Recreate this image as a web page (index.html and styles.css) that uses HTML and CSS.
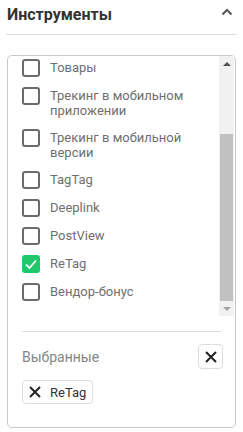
FILE: index.html
```html
<!DOCTYPE html>
<html>
<head>
    <title>Инструменты</title>
    <link rel="stylesheet" href="styles.css">
</head>
<body>
    <div class="panel-head">
        <span class="panel-title">Инструменты</span>
        <svg class="chevron" width="12" height="8" viewBox="0 0 12 8">
            <path d="M1.5 6.5 L6 2 L10.5 6.5" fill="none" stroke="#555" stroke-width="2"/>
        </svg>
    </div>

    <div class="tools-box">
        <div class="scroll-area">
            <ul class="tool-list">
                <li><span class="check"></span><span class="label">Товары</span></li>
                <li><span class="check"></span><span class="label">Трекинг в мобильном приложении</span></li>
                <li><span class="check"></span><span class="label">Трекинг в мобильной версии</span></li>
                <li><span class="check"></span><span class="label">TagTag</span></li>
                <li><span class="check"></span><span class="label">Deeplink</span></li>
                <li><span class="check"></span><span class="label">PostView</span></li>
                <li>
                    <span class="check checked">
                        <svg width="14" height="14" viewBox="0 0 14 14">
                            <path d="M2 7.5 L5.5 11 L12 3.5" fill="none" stroke="#fff" stroke-width="1.8"/>
                        </svg>
                    </span>
                    <span class="label">ReTag</span>
                </li>
                <li><span class="check"></span><span class="label">Вендор-бонус</span></li>
            </ul>
            <div class="scrollbar">
                <div class="sb-btn"><span class="arrow-up"></span></div>
                <div class="sb-track"><div class="sb-thumb"></div></div>
                <div class="sb-btn"><span class="arrow-down"></span></div>
            </div>
        </div>

        <div class="selected">
            <div class="selected-head">
                <span class="selected-title">Выбранные</span>
                <button class="clear-btn">
                    <svg width="12" height="12" viewBox="0 0 12 12">
                        <path d="M1 1 L11 11 M11 1 L1 11" stroke="#222" stroke-width="2"/>
                    </svg>
                </button>
            </div>
            <div class="chips">
                <span class="chip">
                    <svg width="12" height="12" viewBox="0 0 12 12">
                        <path d="M1 1 L11 11 M11 1 L1 11" stroke="#222" stroke-width="2"/>
                    </svg>
                    ReTag
                </span>
            </div>
        </div>
    </div>
</body>
</html>
```

FILE: styles.css
```css
body, html {
    margin: 0;
    font-family: Roboto, "Liberation Sans", sans-serif;
    background-color: #fff;
}

.panel-head {
    display: flex;
    justify-content: space-between;
    align-items: flex-start;
    height: 35px;
    margin: 0 6px;
    padding: 0 1px;
    border-bottom: 1px solid #ddd;
    box-sizing: border-box;
}

.panel-title {
    font-size: 16px;
    font-weight: bold;
    line-height: 20px;
    margin-top: 5px;
    color: #333;
}

.chevron {
    margin-top: 8px;
    margin-right: 3px;
}

.tools-box {
    margin: 20px 7px 0;
    height: 373px;
    border: 1px solid #c8c8c8;
    border-radius: 5px;
    box-sizing: border-box;
}

.scroll-area {
    display: flex;
    height: 260px;
    overflow: hidden;
}

.tool-list {
    flex: 1;
    list-style-type: none;
    margin: -2px 0 0;
    padding: 0 0 0 14px;
}

.tool-list li {
    display: flex;
    align-items: flex-start;
    padding: 5px 0;
}

.check {
    flex: none;
    width: 18px;
    height: 18px;
    border: 2px solid #6a6a6a;
    border-radius: 3px;
    box-sizing: border-box;
    display: flex;
    align-items: center;
    justify-content: center;
}

.check.checked {
    background-color: #1fc96b;
    border-color: #1fc96b;
}

.label {
    margin-left: 10px;
    padding: 1px 0;
    font-size: 13px;
    line-height: 15px;
    color: #6f6f6f;
}

.scrollbar {
    flex: none;
    width: 15px;
    margin-right: 1px;
    display: flex;
    flex-direction: column;
    background-color: #f1f1f1;
}

.sb-btn {
    height: 15px;
    display: flex;
    align-items: center;
    justify-content: center;
}

.sb-track {
    flex: 1;
    display: flex;
    flex-direction: column;
    justify-content: flex-end;
}

.sb-thumb {
    height: 167px;
    margin: 0 1px;
    background-color: #c1c1c1;
}

.arrow-up {
    width: 0;
    height: 0;
    border-left: 4px solid transparent;
    border-right: 4px solid transparent;
    border-bottom: 4px solid #505050;
}

.arrow-down {
    width: 0;
    height: 0;
    border-left: 4px solid transparent;
    border-right: 4px solid transparent;
    border-top: 4px solid #a3a3a3;
}

.selected {
    margin: 15px 14px 0;
    padding-top: 12px;
    border-top: 1px solid #ddd;
}

.selected-head {
    display: flex;
    justify-content: space-between;
    align-items: center;
}

.selected-title {
    font-size: 14px;
    color: #858585;
}

.clear-btn {
    width: 25px;
    height: 25px;
    padding: 0;
    margin-right: -2px;
    background: #fff;
    border: 1px solid #ddd;
    border-radius: 4px;
    display: flex;
    align-items: center;
    justify-content: center;
}

.chips {
    margin-top: 11px;
}

.chip {
    display: inline-flex;
    align-items: center;
    height: 24px;
    padding: 0 6px 0 6px;
    gap: 9px;
    border: 1px solid #ddd;
    border-radius: 4px;
    box-sizing: border-box;
    font-size: 13px;
    color: #333;
}
```
